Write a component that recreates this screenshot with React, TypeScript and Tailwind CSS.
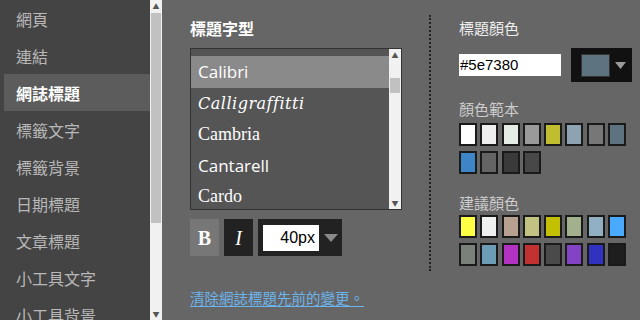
import React from "react";

const navItems = [
  "網頁",
  "連結",
  "網誌標題",
  "標籤文字",
  "標籤背景",
  "日期標題",
  "文章標題",
  "小工具文字",
  "小工具背景",
];

const themeColors = [
  "#ffffff", "#eeeeee", "#e6ede6", "#9a9a9a", "#c0bd2e", "#8ea3b2", "#777777", "#5e7380",
  "#3d85c6", "#646464", "#3a3a3a", "#484848",
];

const suggestedColors = [
  "#ffff44", "#eef0f0", "#b8a090", "#c2c282", "#c2c000", "#a2b08e", "#92b0c4", "#4aaaff",
  "#7a807a", "#6c9cb6", "#b232c2", "#c23232", "#4a4a4a", "#8442c4", "#3232c0", "#1e1e1e",
];

const fonts = [
  { name: "Calibri", cls: "font-['Open_Sans',sans-serif] text-[17px]", active: true },
  { name: "Calligraffitti", cls: "font-['DejaVu_Serif',serif] italic text-[16px] tracking-[0.5px] font-light", active: false },
  { name: "Cambria", cls: "font-['Liberation_Serif',serif] text-[18px]", active: false },
  { name: "Cantarell", cls: "font-['Open_Sans',sans-serif] text-[17px]", active: false },
  { name: "Cardo", cls: "font-['Liberation_Serif',serif] text-[18px]", active: false },
];

const cjk = "font-['Noto_Sans_CJK_TC',sans-serif]";

function Swatch({ color }: { color: string }) {
  return <div className="w-[18px] h-[23px] border-2 border-[#1a1a1a]" style={{ backgroundColor: color }} />;
}

function Scrollbar({ thumbTop, thumbHeight }: { thumbTop: number; thumbHeight: number }) {
  return (
    <div className="relative w-[12px] h-full bg-[#f1f1f1] shrink-0">
      <div className="absolute top-[2px] left-0 w-full text-center text-[7px] leading-[8px] text-[#555]">▲</div>
      <div className="absolute left-[1px] w-[10px] bg-[#c1c1c1]" style={{ top: thumbTop, height: thumbHeight }} />
      <div className="absolute bottom-[2px] left-0 w-full text-center text-[7px] leading-[8px] text-[#555]">▼</div>
    </div>
  );
}

export default function App() {
  return (
    <div className={`flex w-[640px] h-[320px] overflow-hidden bg-[#666666] ${cjk}`}>
      {/* sidebar */}
      <div className="flex w-[162px] h-full shrink-0">
        <div className="w-[150px] h-full bg-[#444444] overflow-hidden">
          {navItems.map((item) => {
            const active = item === "網誌標題";
            return (
              <div
                key={item}
                className={`h-[37px] flex items-center text-[16px] ${
                  active ? "ml-[4px] pl-[12px] bg-[#5c5c5c] text-white font-bold" : "pl-[16px] text-[#b8b8b8]"
                }`}
              >
                {item}
              </div>
            );
          })}
        </div>
        <Scrollbar thumbTop={13} thumbHeight={210} />
      </div>

      {/* main */}
      <div className="flex pl-[28px] pt-[18px]">
        <div className="w-[212px] flex flex-col">
          <div className="text-[16px] leading-[20px] font-bold text-white">標題字型</div>
          <div className="mt-[10px] h-[162px] border border-[#333] bg-[#555555] flex overflow-hidden">
            <div className="flex-1 overflow-hidden">
              <div className="h-[7px]" />
              {fonts.map((f) => (
                <div
                  key={f.name}
                  className={`h-[31px] flex items-center pl-[7px] text-white ${f.active ? "bg-[#8a8a8a] h-[32px]" : ""} ${f.cls}`}
                >
                  {f.name}
                </div>
              ))}
            </div>
            <Scrollbar thumbTop={29} thumbHeight={15} />
          </div>
          <div className="mt-[9px] flex gap-[5px] h-[37px]">
            <div className="w-[29px] bg-[#777777] flex items-center justify-center text-white font-bold text-[20px] font-['Liberation_Serif',serif]">
              B
            </div>
            <div className="w-[29px] bg-[#222222] flex items-center justify-center text-white italic text-[20px] font-['Liberation_Serif',serif]">
              I
            </div>
            <div className="w-[84px] bg-[#222222] flex items-center pl-[5px]">
              <div className="w-[56px] h-[26px] bg-white text-black text-[16px] flex items-center justify-end pr-[4px] font-['Liberation_Sans',sans-serif]">
                40px
              </div>
              <svg width="14" height="8" viewBox="0 0 14 8" className="ml-[5px]">
                <path d="M0 0 L14 0 L7 8 Z" fill="#8a8a8a" />
              </svg>
            </div>
          </div>
          <a href="#" className="mt-[31px] text-[14.5px] text-[#6cb4ec] underline underline-offset-2">
            清除網誌標題先前的變更。
          </a>
        </div>

        <div className="ml-[27px] mt-[-3px] h-[256px] border-l-[2px] border-dotted border-[#222]" />

        <div className="ml-[28px] flex flex-col">
          <div className="text-[15px] leading-[20px] text-[#eeeeee]">標題顏色</div>
          <div className="mt-[10px] flex items-center gap-[10px]">
            <div className="w-[102px] h-[22px] bg-white text-black text-[15px] leading-[22px] pl-[1px] font-['Liberation_Sans',sans-serif]">
              #5e7380
            </div>
            <div className="w-[61px] h-[34px] bg-[#111111] flex items-center pl-[10px]">
              <div className="w-[29px] h-[23px] bg-[#5e7380] border border-[#333]" />
              <svg width="11" height="7" viewBox="0 0 11 7" className="ml-[5px]">
                <path d="M0 0 L11 0 L5.5 7 Z" fill="#9a9a9a" />
              </svg>
            </div>
          </div>
          <div className="mt-[17px] text-[15px] leading-[20px] text-[#cccccc]">顏色範本</div>
          <div className="mt-[4px] grid grid-cols-[repeat(8,18px)] gap-x-[3.3px] gap-y-[5px]">
            {themeColors.map((c, i) => (
              <Swatch key={i} color={c} />
            ))}
          </div>
          <div className="mt-[19px] text-[15px] leading-[20px] text-[#cccccc]">建議顏色</div>
          <div className="mt-[2px] grid grid-cols-[repeat(8,18px)] gap-x-[3.3px] gap-y-[5px]">
            {suggestedColors.map((c, i) => (
              <Swatch key={i} color={c} />
            ))}
          </div>
        </div>
      </div>
    </div>
  );
}
